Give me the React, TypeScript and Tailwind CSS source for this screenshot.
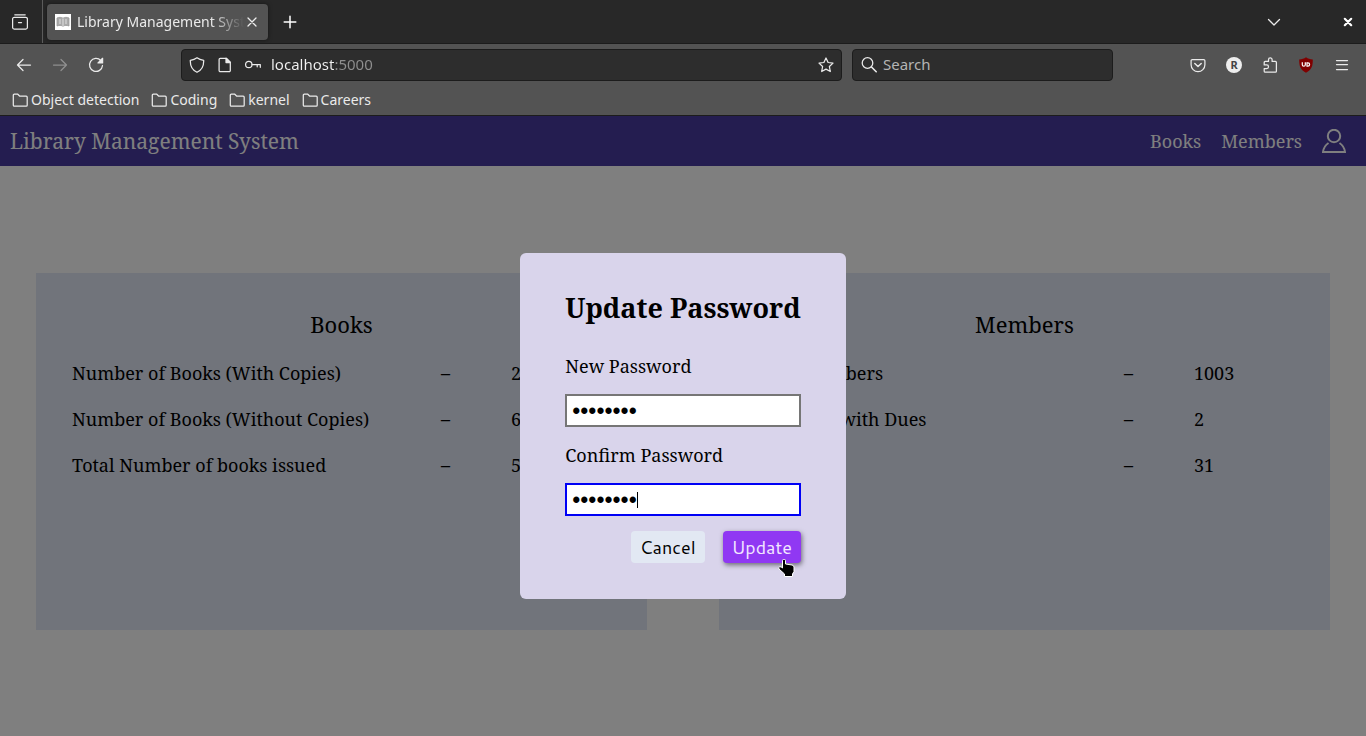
import { useState } from "react";
import type { ReactNode } from "react";

const SERIF = "font-['Noto_Serif','DejaVu_Serif',serif]";
const CHROME = "font-['Noto_Sans',sans-serif]";
const BUTTON = "font-['Cantarell','Noto_Sans',sans-serif]";

function Icon({ children, className = "size-4" }: { children: ReactNode; className?: string }) {
  return (
    <svg viewBox="0 0 16 16" className={className} fill="none" stroke="currentColor" strokeWidth="1.25" strokeLinecap="round" strokeLinejoin="round" aria-hidden="true">
      {children}
    </svg>
  );
}

function IconButton({ label, children, className = "" }: { label: string; children: ReactNode; className?: string }) {
  return (
    <button type="button" aria-label={label} className={`flex size-9 items-center justify-center ${className}`}>
      {children}
    </button>
  );
}

function TabStrip() {
  return (
    <div className="flex h-11 items-center border-b border-[#1c1c1c] bg-[#282828]">
      <IconButton label="Recent browsing" className="ml-[2px]">
        <Icon>
          <path d="M2.8 0.8h10.4M2.2 3.4h11.6a1.6 1.6 0 0 1 1.6 1.6v8.4a1.6 1.6 0 0 1-1.6 1.6H2.2a1.6 1.6 0 0 1-1.6-1.6V5a1.6 1.6 0 0 1 1.6-1.6zM6.5 8.6h3" />
        </Icon>
      </IconButton>
      <div className="ml-1 h-full border-l border-[#5c5c5c]" />
      <div className="ml-1 flex h-9 w-[221px] items-center rounded bg-[#535353] pr-2 pl-2 shadow-[0_0_4px_rgba(0,0,0,0.5)]">
        <svg viewBox="0 0 16 16" className="size-4 shrink-0" aria-hidden="true">
          <rect width="16" height="16" fill="#fff" />
          <path d="M2 4C4 3 6.400 3.200 8 4.200 9.600 3.200 12 3 14 4v8c-2-.8-4.400-.8-6 .2-1.600-1-4-1-6-.2z" fill="#aaa" stroke="#999" strokeWidth="0.8" />
          <path d="M8 4.500v7.500M5 5v5M11 5v5" stroke="#e8e8e8" strokeWidth="0.9" />
        </svg>
        <span className="ml-[6px] min-w-0 flex-1 overflow-hidden text-[14px] whitespace-nowrap text-[#eaeaea] [mask-image:linear-gradient(to_right,black_80%,transparent)]">
          Library Management System
        </span>
        <button type="button" aria-label="Close tab" className="text-[#eee]">
          <Icon><path d="M4 4l8 8M12 4l-8 8" /></Icon>
        </button>
      </div>
      <IconButton label="New tab" className="ml-1 text-white">
        <Icon><path d="M8 2.200v11.600M2.200 8h11.600" strokeWidth="1.500" /></Icon>
      </IconButton>
      <div className="flex-1" />
      <IconButton label="List all tabs"><Icon><path d="M2.500 5.500L8 11l5.500-5.500" /></Icon></IconButton>
      <IconButton label="Close window" className="ml-[38px] text-white">
        <Icon><path d="M4.800 4.800l6.400 6.400M11.200 4.800l-6.400 6.400" strokeWidth="2.200" /></Icon>
      </IconButton>
    </div>
  );
}

function NavBar() {
  return (
    <div className="flex h-[41px] items-center pl-[6px]">
      <IconButton label="Back"><Icon><path d="M14.500 8H1.500M7 2.500L1.500 8 7 13.500" /></Icon></IconButton>
      <IconButton label="Forward" className="text-[#8f8f8f]"><Icon><path d="M1.500 8h13M9 2.500L14.500 8 9 13.500" /></Icon></IconButton>
      <IconButton label="Reload">
        <Icon>
          <path d="M12.800 3.500A6.500 6.500 0 1 0 14.500 8.500" />
          <path d="M14.600 1.300v4.600H10z" fill="currentColor" />
        </Icon>
      </IconButton>
      <div className="ml-[67px] flex h-8 flex-1 items-center rounded border border-[#1c1c1c] bg-[#2d2d2d] px-[7px]">
        <Icon>
          <path d="M8 .8C6.500 2 4 3 1.300 3.300c-.2 5.500 1.500 9.700 6.700 12 5.200-2.300 6.900-6.500 6.700-12C12 3 9.500 2 8 .8z" />
        </Icon>
        <Icon className="ml-3 size-4">
          <path d="M3.300 1.300h6l4 4v8.200a1.200 1.200 0 0 1-1.200 1.200H3.300a1.200 1.200 0 0 1-1.200-1.200v-11a1.200 1.200 0 0 1 1.200-1.200z" />
          <path d="M9 1.300v4.200h4.200z" fill="currentColor" />
        </Icon>
        <Icon className="ml-3 size-4">
          <circle cx="3.800" cy="7.500" r="3.200" />
          <path d="M7 7.500h8.300v2.800M12.200 7.500v2.300" />
        </Icon>
        <input
          aria-label="Address"
          defaultValue="localhost:5000"
          className="ml-[10px] h-7 w-0 flex-1 bg-[linear-gradient(to_right,#f2f2f2_63px,#8f8f8f_63px)] bg-clip-text pb-[2px] text-[15px] text-transparent caret-white outline-none"
        />
        <button type="button" aria-label="Bookmark this page">
          <Icon><path d="M8 1l2.100 4.500 4.900.6-3.600 3.400.9 5L8 12.100l-4.300 2.400.9-5L1 6.100l4.900-.6z" /></Icon>
        </button>
      </div>
      <div className="ml-[10px] flex h-8 w-[261px] items-center rounded border border-[#1c1c1c] bg-[#2d2d2d] px-2">
        <Icon><circle cx="6.500" cy="6" r="5.300" /><path d="M10.500 10l4.700 4.700" strokeWidth="1.600" /></Icon>
        <input aria-label="Search" placeholder="Search" className="ml-[6px] h-7 w-0 flex-1 bg-transparent pb-[2px] text-[15px] outline-none placeholder:text-[#b4b4b4]" />
      </div>
      <div className="mr-[6px] ml-[67px] flex">
        <IconButton label="Save to Pocket">
          <Icon>
            <path d="M2.300 2.500h11.400a1.200 1.200 0 0 1 1.200 1.200v4.100a6.900 6.900 0 0 1-13.800 0V3.700a1.200 1.200 0 0 1 1.200-1.200z" />
            <path d="M4.800 6.500L8 9.500l3.200-3" strokeWidth="1.500" />
          </Icon>
        </IconButton>
        <IconButton label="Account">
          <span className="flex size-4 items-center justify-center rounded-full bg-[#eee] text-[11px] leading-4 font-bold text-[#444]">R</span>
        </IconButton>
        <IconButton label="Extensions">
          <Icon>
            <path d="M3.200 4.400h3.300V2.700a1.800 1.800 0 0 1 3.600 0v1.700h3.300a1 1 0 0 1 1 1v8.800a1 1 0 0 1-1 1H3.200a1 1 0 0 1-1-1v-2.700h2.500a1.800 1.800 0 0 0 0-3.600H2.200V5.400a1 1 0 0 1 1-1z" />
          </Icon>
        </IconButton>
        <IconButton label="uBlock">
          <svg viewBox="0 0 16 16" className="size-4" aria-hidden="true">
            <path d="M8 .3c2 1.400 4 2 6.800 2.200 0 6.500-.8 10-6.800 13.300C2 12.500 1.200 9 1.200 2.500 4 2.300 6 1.700 8 .3z" fill="#800000" />
            <path d="M4.300 5.200v2.500a1.500 1.500 0 0 0 3 0V5.200" fill="none" stroke="#fff" strokeWidth="1.200" />
            <path d="M9 5.800h.9a1.700 1.700 0 0 1 0 3.400H9z" fill="none" stroke="#fff" strokeWidth="1.200" />
          </svg>
        </IconButton>
        <IconButton label="Menu"><Icon><path d="M2.500 3.500h11M2.500 7.500h11M2.500 12.500h11" /></Icon></IconButton>
      </div>
    </div>
  );
}

function Bookmarks() {
  return (
    <nav aria-label="Bookmarks" className="flex h-[31px] items-center gap-3 border-b border-[#1c1c1c] pb-px pl-3 text-[14px] leading-5">
      {["Object detection", "Coding", "kernel", "Careers"].map((name) => (
        <a key={name} href="#" className="flex items-center gap-[3px]">
          <Icon>
            <path d="M1.300 12.300V3.200a1 1 0 0 1 1-1h3.500l2 2h6.400a1 1 0 0 1 1 1v8a1 1 0 0 1-1 1H2.300a1 1 0 0 1-1-1z" />
          </Icon>
          {name}
        </a>
      ))}
    </nav>
  );
}

function StatCard({ title, rows }: { title: string; rows: [string, string][] }) {
  return (
    <section className="min-h-[357px] flex-1 bg-[#e2e8f7] px-9 pt-9">
      <h2 className="text-center text-[22px] leading-[30px]">{title}</h2>
      <table className="mt-[11px] w-full text-left text-[18px] leading-[26px]">
        <tbody>
          {rows.map(([name, value]) => (
            <tr key={name}>
              <th scope="row" className="py-[10px] font-normal">{name}</th>
              <td className="w-[70px]">–</td>
              <td className="w-[100px]">{value}</td>
            </tr>
          ))}
        </tbody>
      </table>
    </section>
  );
}

function PasswordField({ id, label, active }: { id: string; label: string; active?: boolean }) {
  const [value, setValue] = useState("password");
  return (
    <div className="flex flex-col gap-[14px]">
      <label htmlFor={id} className="text-[18px] leading-7">{label}</label>
      <div className="relative flex">
        <input
          id={id}
          type="password"
          value={value}
          onChange={(e) => setValue(e.target.value)}
          className={`h-[33px] w-0 flex-1 border-2 bg-white px-[5px] pt-[2px] font-['Liberation_Sans',sans-serif] text-[23px] outline-none ${active ? "border-[#0000f5]" : "border-[#767676]"}`}
        />
        {active && <span className="absolute top-[9px] left-[72px] h-4 w-px bg-black" />}
      </div>
    </div>
  );
}

function UpdatePasswordDialog() {
  return (
    <div className="absolute inset-0 flex items-center justify-center bg-black/50">
      <form role="dialog" aria-labelledby="dialog-title" className="rounded-md bg-[#d9d4eb] px-[45px] pt-9 pb-9" onSubmit={(e) => e.preventDefault()}>
        <h2 id="dialog-title" className="text-[27px] leading-[38px] font-bold whitespace-nowrap">Update Password</h2>
        <div className="mt-[25px] flex flex-col gap-[14px]">
          <PasswordField id="new-password" label="New Password" />
          <PasswordField id="confirm-password" label="Confirm Password" active />
        </div>
        <div className={`mt-[15px] flex justify-end gap-[18px] text-[18px] leading-8 ${BUTTON}`}>
          <button type="button" className="w-[74px] rounded bg-[#e2e8f3] text-center">Cancel</button>
          <button type="submit" className="relative w-[78px] rounded bg-[#9038f3] text-center text-[#f3e8ff] shadow-[1px_2px_5px_rgba(0,0,0,0.5)]">
            Update
            <svg viewBox="0 0 17 18" className="absolute top-7 right-[6px] h-[18px] w-[17px]" aria-hidden="true">
              <path d="M4.500 1.500q0-1 1-1h1q1 0 1 1V5l6.500 1q2 .5 2 2v4.500L14.500 15v2.500H6.500V15L1 10q-.8-1.500.7-2.200 1.300-.5 2.800 1.200z" fill="#000" stroke="#fff" strokeLinejoin="round" />
            </svg>
          </button>
        </div>
      </form>
    </div>
  );
}

export default function App() {
  return (
    <div className={`flex min-h-screen flex-col bg-white ${SERIF}`}>
      <div className={`bg-[#535353] text-[#eaeaea] ${CHROME}`}>
        <TabStrip />
        <NavBar />
        <Bookmarks />
      </div>
      <div className="relative flex flex-1 flex-col">
        <header className="flex h-[50px] items-center justify-between bg-[#483aa0] pr-5 pl-[10px] text-white">
          <h1 className="text-[21px] leading-[33px]">Library Management System</h1>
          <nav className="flex items-center gap-5 text-[18px]">
            <a href="#">Books</a>
            <a href="#">Members</a>
            <a href="#" aria-label="Profile">
              <svg viewBox="0 0 24 24" className="size-6" fill="none" stroke="currentColor" strokeWidth="2" aria-hidden="true">
                <circle cx="12" cy="7" r="6.200" />
                <path d="M6.500 14C3.500 16 1.500 19 1 23h22c-.5-4-2.500-7-5.500-9" />
              </svg>
            </a>
          </nav>
        </header>
        <main className="flex flex-1 items-center gap-[72px] px-9">
          <StatCard title="Books" rows={[["Number of Books (With Copies)", "2"], ["Number of Books (Without Copies)", "6"], ["Total Number of books issued", "5"]]} />
          <StatCard title="Members" rows={[["Total Members", "1003"], ["Members with Dues", "2"], ["Total", "31"]]} />
        </main>
        <UpdatePasswordDialog />
      </div>
    </div>
  );
}
